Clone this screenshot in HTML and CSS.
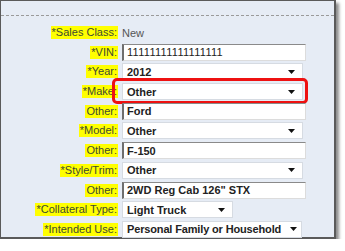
FILE: index.html
```html
<!DOCTYPE html>
<html>
<head>
<meta charset="utf-8">
<link rel="stylesheet" href="styles.css">
</head>
<body>
<div class="panel">
  <div class="rule"></div>
  <div class="form">
    <div class="label"><span>*Sales Class:</span></div>
    <div class="static">New</div>

    <div class="label"><span>*VIN:</span></div>
    <div class="ctl"><input class="text vin" value="11111111111111111"></div>

    <div class="label"><span>*Year:</span></div>
    <div class="ctl"><div class="select wide"><span>2012</span><svg class="arrow" width="7" height="4" viewBox="0 0 7 4"><path d="M0 0H7L3.5 4Z" fill="#111"/></svg></div></div>

    <div class="label"><span>*Make:</span></div>
    <div class="ctl highlight"><div class="select wide"><span>Other</span><svg class="arrow" width="7" height="4" viewBox="0 0 7 4"><path d="M0 0H7L3.5 4Z" fill="#111"/></svg></div></div>

    <div class="label"><span>Other:</span></div>
    <div class="ctl"><input class="text" value="Ford"></div>

    <div class="label"><span>*Model:</span></div>
    <div class="ctl"><div class="select wide"><span>Other</span><svg class="arrow" width="7" height="4" viewBox="0 0 7 4"><path d="M0 0H7L3.5 4Z" fill="#111"/></svg></div></div>

    <div class="label"><span>Other:</span></div>
    <div class="ctl"><input class="text" value="F-150"></div>

    <div class="label"><span>*Style/Trim:</span></div>
    <div class="ctl"><div class="select wide"><span>Other</span><svg class="arrow" width="7" height="4" viewBox="0 0 7 4"><path d="M0 0H7L3.5 4Z" fill="#111"/></svg></div></div>

    <div class="label"><span>Other:</span></div>
    <div class="ctl"><input class="text" value="2WD Reg Cab 126&quot; STX"></div>

    <div class="label"><span>*Collateral Type:</span></div>
    <div class="ctl"><div class="select short"><span>Light Truck</span><svg class="arrow" width="7" height="4" viewBox="0 0 7 4"><path d="M0 0H7L3.5 4Z" fill="#111"/></svg></div></div>

    <div class="label"><span>*Intended Use:</span></div>
    <div class="ctl"><div class="select auto"><span>Personal Family or Household</span><svg class="arrow" width="7" height="4" viewBox="0 0 7 4"><path d="M0 0H7L3.5 4Z" fill="#111"/></svg></div></div>
  </div>
</div>
</body>
</html>
```
FILE: styles.css
```css
html, body {
  margin: 0;
  padding: 0;
  background: #ffffff;
}
body {
  font-family: "Liberation Sans", Arial, sans-serif;
}
.panel {
  box-sizing: border-box;
  width: 336px;
  height: 239px;
  border: 1px solid #5a5a5a;
  border-right-width: 2px;
  border-bottom-width: 2px;
  background: #e6ecf5;
  box-shadow: 3px 3px 3px rgba(0,0,0,0.45);
}
.rule {
  height: 14px;
  border-bottom: 1px dashed #9a9a9a;
}
.form {
  display: grid;
  grid-template-columns: 117px 1fr;
  grid-auto-rows: 17px;
  column-gap: 4px;
  row-gap: 2.7px;
  padding-top: 8px;
}
.label {
  display: flex;
  justify-content: flex-end;
  align-items: center;
}
.label span {
  background: #ffff00;
  color: #3e4a30;
  font-size: 11px;
  line-height: 13px;
  padding: 0 1px;
  white-space: nowrap;
}
.static {
  display: flex;
  align-items: center;
  font-size: 11px;
  color: #555;
}
.ctl {
  display: flex;
  align-items: center;
  position: relative;
}
.text {
  box-sizing: border-box;
  width: 184px;
  height: 17px;
  margin: 0;
  padding: 0 3px;
  border: 1px solid #dcdcdc;
  border-top-color: #8a8a8a;
  border-left: 2px solid #6e6e6e;
  background: #fff;
  font-family: "Liberation Sans", Arial, sans-serif;
  font-size: 11px;
  font-weight: bold;
  color: #222;
  outline: none;
}
.text.vin {
  font-weight: normal;
  letter-spacing: 0.3px;
}
.select {
  box-sizing: border-box;
  height: 17px;
  display: flex;
  align-items: center;
  justify-content: space-between;
  background: #fff;
  border: 1px solid #d6dbe2;
  padding: 0 7px 0 4px;
  font-size: 11px;
  font-weight: bold;
  color: #222;
  white-space: nowrap;
}
.select.wide { width: 181px; }
.select.short { width: 111px; }
.select.auto {
  width: 180px;
  padding-right: 4px;
  letter-spacing: -0.15px;
}
.select.auto .arrow { margin-left: 3px; }
.arrow { flex: none; margin-left: 6px; }
.highlight::after {
  content: "";
  position: absolute;
  left: -10px;
  top: -5px;
  width: 190px;
  height: 20px;
  border: 3px solid #ee1111;
  border-radius: 5px;
  pointer-events: none;
}
```
